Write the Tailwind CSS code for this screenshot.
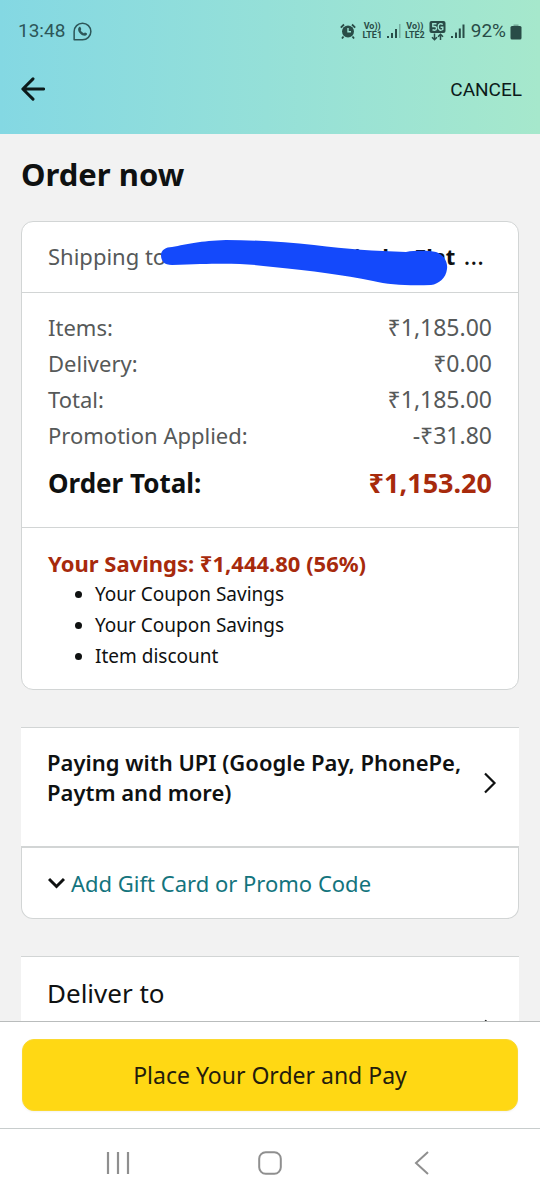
<!DOCTYPE html>
<html lang="en">
<head>
<meta charset="utf-8">
<meta name="viewport" content="width=device-width, initial-scale=1">
<title>Order now</title>
<script src="https://cdn.jsdelivr.net/npm/@tailwindcss/browser@4"></script>
</head>
<body class="flex h-screen flex-col overflow-hidden bg-[#f2f2f2] font-['Noto_Sans',sans-serif] text-[#0f1111]">
<header class="shrink-0 bg-linear-to-r from-[#84d8e3] to-[#a6e8cc] px-[18px] font-[Roboto,sans-serif]">
  <div class="flex h-[62px] items-center justify-between text-[#2d5658]">
    <div class="flex items-center gap-2 text-[19px]">
      <span>13:48</span>
      <svg class="size-[19px]" viewBox="0 0 20 20" fill="none" stroke="currentColor" stroke-width="1.6"><path d="M1.200 18.800V10A8.800 8.800 0 1 1 10 18.800z" stroke-linejoin="round"/><path d="M6.300 5.600c.5-.6 1.300-.7 1.600-.1l.8 1.800c.1.400-.7 1.200-.6 1.500.7 1.500 1.700 2.400 3.200 3 .4.100 1-.9 1.400-.8l1.700.8c.8.400.4 2.400-1.700 2.600-3.600.1-7.600-3.700-7.300-7.100.1-.7.400-1.300.9-1.700z" fill="currentColor"  stroke="none"/></svg>
    </div>
    <div class="flex items-center gap-1 text-[#294c47]">
      <svg class="mr-0.5 size-4" viewBox="0 0 16 16"><circle cx="8" cy="8.500" r="6" fill="currentColor"/><path d="M.8 4.600L4 1.500M15.200 4.600L12 1.500M3.500 13.500L2 15.500M12.500 13.500l1.500 2" stroke="currentColor" stroke-width="1.800" fill="none"/><path d="M8 5v3.700h3" stroke="#9ce2d2" stroke-width="1.400" fill="none"/></svg>
      <span class="text-center text-[9px] leading-[9px] font-bold">Vo))<br>LTE1</span>
      <svg class="h-4 w-[15px]" viewBox="0 0 15 16" fill="currentColor"><path d="M1 13h2v2H1zM5 10h2v5H5zM9 6h2v9H9z"/><path d="M13 1h1.500v14H13z" opacity=".35"/></svg>
      <span class="text-center text-[9px] leading-[9px] font-bold">Vo))<br>LTE2</span>
      <svg class="h-[20px] w-[17px]" viewBox="0 0 17 20"><rect x=".5" y="0" width="16" height="12" rx="2" fill="currentColor"/><path d="M7.500 2.700H3.800v2.800h2.100c2.200 0 2.200 3.700-.2 3.700-1 0-1.700-.2-2.200-.6M13.800 3.500c-2-1.500-4.600-.7-4.600 2.500 0 3.500 2.800 3.700 4.600 2.500V6.300h-2.200" fill="none" stroke="#9fe3d1" stroke-width="1.400"/><path d="M5.500 12.500v6M3 16.300l2.500 2.500L8 16.300M11.500 19v-5.500M9 15.800l2.500-2.500 2.500 2.500" fill="none" stroke="currentColor" stroke-width="1.500"/></svg>
      <svg class="h-4 w-[15px]" viewBox="0 0 15 16" fill="currentColor"><path d="M1 13h2v2H1zM5 9.500h2V15H5zM8.800 5.500h2V15h-2zM12.500 1.500h2V15h-2z"/></svg>
      <span class="ml-0.5 text-[19px]">92%</span>
      <svg class="h-[17px] w-3" viewBox="0 0 12 17" fill="currentColor"><path d="M3.500 3V1.500h5V3z" opacity=".4"/><rect x=".5" y="3" width="11" height="13.500" rx="1.500"/></svg>
    </div>
  </div>
  <div class="flex h-[72px] items-start justify-between pt-[12px] text-[#0c1a1a]">
    <button type="button" aria-label="Back" class="p-[3px]"><svg class="size-[24px]" viewBox="0 0 26 26" fill="none" stroke="currentColor" stroke-width="3.200" stroke-linecap="round" stroke-linejoin="round"><path d="M24.500 13H3M13 2L2 13l11 11"/></svg></button>
    <button type="button" class="pt-[2px] text-[19px]">CANCEL</button>
  </div>
</header>

<main class="flex min-h-0 flex-1 flex-col overflow-hidden px-[21px] pt-[18px] *:shrink-0">
  <h1 class="text-[31px] leading-[44px] font-bold">Order now</h1>
  <section class="mt-[25px] rounded-xl border border-[#d2d5d5] bg-white text-[22px]">
    <div class="relative flex h-[71px] items-center border-b border-[#d2d5d5] px-[26px] pb-[2px]">
      <p class="flex w-full text-[#565959]"><span>Shipping to</span><span class="ml-auto pr-2 font-bold text-[#0f1111]">inda, Flat</span><span class="pr-2 text-[26px] leading-[30px] text-[#0f1111]">…</span></p>
      <svg class="absolute top-[16px] left-[138px] h-[50px] w-[290px]" viewBox="0 0 290 50"><path d="M12 9C28 6 40 3 66 2c30 0 60 2 88 5 34 4 60 6 92 7 12-2 24-1 30 0 8 3 12 10 11 17-1 9-8 15-16 16-20 1-42 0-58-4-30-6-60-10-100-14-30-4-50-4-101-2C4 27 1 23 1 17c0-5 5-8 11-8z" fill="#1449fb"/></svg>
    </div>
    <dl class="grid grid-cols-[1fr_auto] border-b border-[#d2d5d5] px-[26px] pt-[16px] pb-[22px] leading-[36px] text-[#565959]">
      <dt>Items:</dt><dd class="text-right text-[23px]">₹1,185.00</dd>
      <dt>Delivery:</dt><dd class="text-right text-[23px]">₹0.00</dd>
      <dt>Total:</dt><dd class="text-right text-[23px]">₹1,185.00</dd>
      <dt>Promotion Applied:</dt><dd class="text-right text-[23px]">-₹31.80</dd>
      <dt class="pt-2 text-[26px] leading-[44px] font-bold text-[#0f1111]">Order Total:</dt><dd class="pt-2 text-right text-[27px] leading-[44px] font-bold text-[#a72a0c]">₹1,153.20</dd>
    </dl>
    <div class="px-[26px] pt-[19px] pb-[17px]">
      <p class="leading-[32px] font-bold text-[#a72a0c]">Your Savings: ₹1,444.80 (56%)</p>
      <ul class="list-disc pl-[47px] text-[19px] leading-[31px]">
        <li>Your Coupon Savings</li>
        <li>Your Coupon Savings</li>
        <li>Item discount</li>
      </ul>
    </div>
  </section>

  <section class="mt-[37px]">
    <button type="button" class="flex w-full items-start justify-between border-t border-[#d2d5d5] bg-white px-[26px] pt-[19px] pb-[39px] text-left text-[22px] leading-[30px] font-semibold">
      <span>Paying with UPI (Google Pay, PhonePe,<br>Paytm and more)</span>
      <svg class="mt-[25px] -mr-1 h-[22px] w-[14px] shrink-0" viewBox="0 0 14 22" fill="none" stroke="currentColor" stroke-width="2.200"><path d="M2 1.500L11.500 11 2 20.500"/></svg>
    </button>
    <a href="#" class="flex h-[73px] items-center gap-[6px] rounded-b-xl border border-t-2 border-[#d2d5d5] bg-white px-[26px] text-[22px] text-[#13747d]">
      <svg class="h-3 w-[17px] text-[#0f1111]" viewBox="0 0 17 12" fill="none" stroke="currentColor" stroke-width="3"><path d="M1 2l7.500 7.500L16 2"/></svg>
      Add Gift Card or Promo Code
    </a>
  </section>

  <section class="mt-[37px] border-t border-[#d2d5d5] bg-white px-[26px] pt-[18px]">
    <h2 class="text-[26px] leading-[36px]">Deliver to</h2>
    <div class="flex justify-end pt-[8px]">
      <svg class="-mr-1 h-[22px] w-[14px]" viewBox="0 0 14 22" fill="none" stroke="currentColor" stroke-width="2.200"><path d="M2 1.500L11.500 11 2 20.500"/></svg>
    </div>
  </section>
</main>

<footer class="shrink-0 bg-white">
  <div class="border-y border-t-[#b9bcbc] border-b-[#c8cdcd] px-[22px] py-[17px]">
    <button type="button" class="h-[72px] w-full rounded-xl border border-[#fbd92f] bg-[#ffd814] text-[23px] text-[#241c0c] shadow-xs">Place Your Order and Pay</button>
  </div>
  <nav class="flex h-[71px] items-center justify-around px-[42px] pb-[3px] text-[#8f8f8f]">
    <button type="button" aria-label="Recent apps"><svg class="size-6" viewBox="0 0 24 24" fill="none" stroke="currentColor" stroke-width="2.200"><path d="M2 1v22M12 1v22M22 1v22"/></svg></button>
    <button type="button" aria-label="Home"><svg class="size-6" viewBox="0 0 24 24" fill="none" stroke="currentColor" stroke-width="2"><rect x="1.200" y="1.200" width="21.600" height="21.600" rx="6.500"/></svg></button>
    <button type="button" aria-label="Back"><svg class="size-6" viewBox="0 0 24 24" fill="none" stroke="currentColor" stroke-width="2"><path d="M18 1L6 12l12 11"/></svg></button>
  </nav>
</footer>
</body>
</html>
